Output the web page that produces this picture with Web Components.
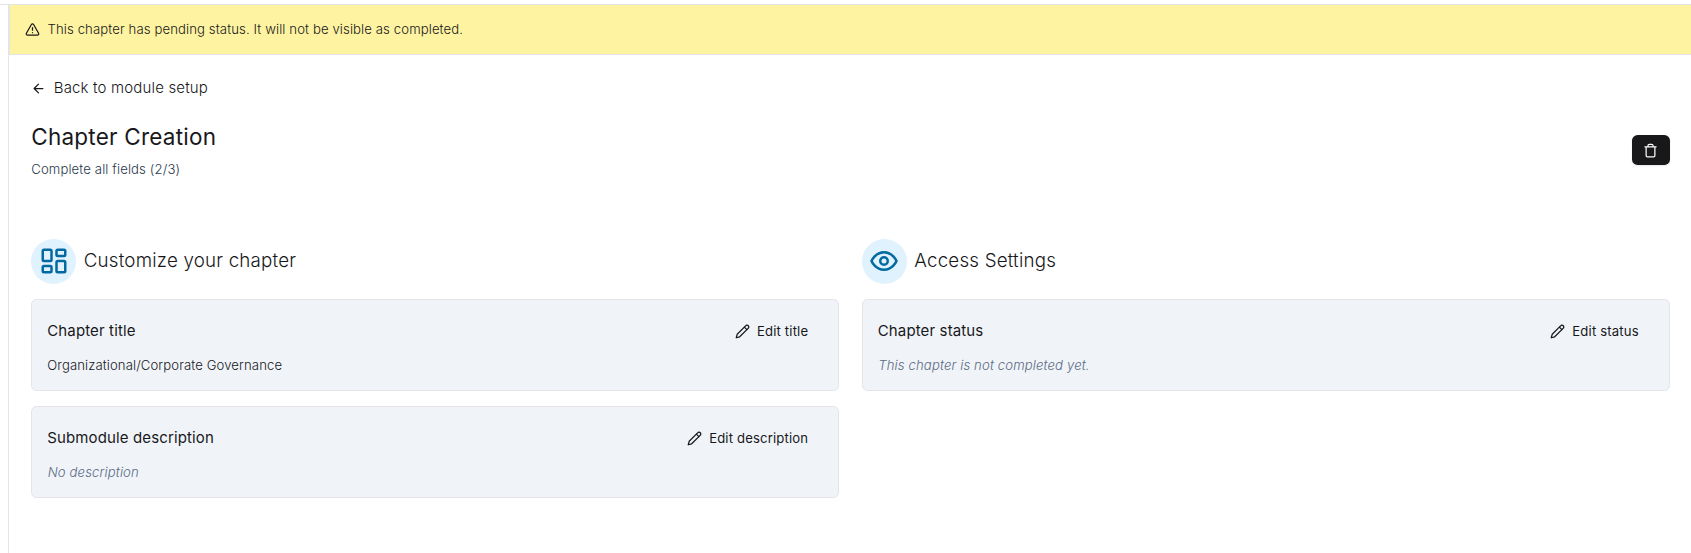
<!DOCTYPE html>
<html lang="en">
<head>
<meta charset="utf-8">
<title>Chapter Creation</title>
<style>
html{font-size:15px}
body{margin:0;background:#fff;color:#18181b;font-family:Inter,"Noto Sans",sans-serif;font-weight:300;line-height:1.5;overflow:hidden}
</style>
</head>
<body>
<chapter-page></chapter-page>
<script>
const define = (name, html) => {
  const template = document.createElement('template');
  template.innerHTML = html;
  customElements.define(name, class extends HTMLElement {
    constructor() {
      super();
      this.attachShadow({ mode: 'open' }).append(template.content.cloneNode(true));
    }
  });
};

const ICONS = {
  alert: '<path d="m21.73 18-8-14a2 2 0 0 0-3.48 0l-8 14A2 2 0 0 0 4 21h16a2 2 0 0 0 1.73-3Z"/><path d="M12 9v4M12 17h.01"/>',
  back: '<path d="m12 19-7-7 7-7M19 12H5"/>',
  trash: '<path d="M3 6h18M19 6v14c0 1-1 2-2 2H7c-1 0-2-1-2-2V6M8 6V4c0-1 1-2 2-2h4c1 0 2 1 2 2v2"/>',
  pencil: '<path d="M17 3a2.85 2.83 0 1 1 4 4L7.5 20.5 2 22l1.5-5.5Z"/><path d="m15 5 4 4"/>',
  dashboard: '<rect width="7" height="9" x="3" y="3" rx="1"/><rect width="7" height="5" x="14" y="3" rx="1"/><rect width="7" height="9" x="14" y="12" rx="1"/><rect width="7" height="5" x="3" y="16" rx="1"/>',
  eye: '<path d="M2 12s3-7 10-7 10 7 10 7-3 7-10 7-10-7-10-7Z"/><circle cx="12" cy="12" r="3"/>'
};

customElements.define('line-icon', class extends HTMLElement {
  constructor() {
    super();
    this.attachShadow({ mode: 'open' }).innerHTML = `
      <style>
        :host{display:block;flex:none;width:var(--icon-size,1rem);height:var(--icon-size,1rem)}
        svg{display:block;width:100%;height:100%;fill:none;stroke:currentColor;stroke-width:2;stroke-linecap:round;stroke-linejoin:round}
      </style>
      <svg viewBox="0 0 24 24">${ICONS[this.getAttribute('name')]}</svg>`;
  }
});

define('status-banner', `
  <style>
    :host{display:flex;align-items:center;gap:.5rem;box-sizing:border-box;height:50px;padding:0 15px;border:1px solid #e4e4e7;border-width:0 0 1px 1px;background:#fef3a1;font-size:.875rem;letter-spacing:.12px}
  </style>
  <line-icon name="alert"></line-icon><span><slot></slot></span>`);

define('back-link', `
  <style>
    :host{display:flex;align-items:center;gap:.5rem;height:1.5rem;margin-bottom:1.5rem;letter-spacing:.16px}
  </style>
  <line-icon name="back"></line-icon><span><slot></slot></span>`);

define('page-heading', `
  <style>
    :host{display:flex;align-items:center;justify-content:space-between}
    h1{margin:0 0 8px;font-size:1.5rem;line-height:2rem;font-weight:400;letter-spacing:.225px}
    p{margin:0;font-size:.875rem;line-height:1.25rem;color:#2a384d;letter-spacing:.13px}
    button{display:flex;align-items:center;height:2rem;padding:0 11.5px 0 11px;border:0;border-radius:5.6px;background:#18181b;color:#fafafa;box-shadow:0 1px 2px #0000001a}
  </style>
  <div><h1><slot name="title"></slot></h1><p><slot></slot></p></div>
  <button aria-label="Delete"><line-icon name="trash"></line-icon></button>`);

define('section-heading', `
  <style>
    :host{display:flex;align-items:center;gap:.5rem}
    .badge{padding:.5rem;border-radius:50%;background:#e0f2fe;color:#0369a1;--icon-size:2rem}
    h2{margin:0;font-size:1.25rem;line-height:1.75rem;font-weight:300;letter-spacing:.2px}
  </style>
  <div class="badge"><slot name="icon"></slot></div><h2><slot></slot></h2>`);

define('setting-card', `
  <style>
    :host{display:block;margin-top:1rem;padding:1rem;border:1px solid #e4e4e7;border-radius:5.6px;background:#f0f4f9}
    .top{display:flex;align-items:center;justify-content:space-between;height:2.25rem;font-weight:400;letter-spacing:.13px}
    .action{display:flex;align-items:center;gap:.5rem;padding:0 1rem;font-size:.875rem;letter-spacing:.16px}
    .value{margin-top:.5rem;font-size:.875rem;line-height:1.25rem;letter-spacing:.11px}
    :host([empty]) .value{font-style:italic;color:#5a6a82;letter-spacing:.14px;text-indent:.5px}
  </style>
  <div class="top"><slot name="title"></slot>
    <div class="action"><line-icon name="pencil"></line-icon><slot name="action"></slot></div></div>
  <div class="value"><slot></slot></div>`);

define('chapter-page', `
  <style>
    :host{display:block;box-sizing:border-box;height:553px;padding-top:4px}
    .rule{height:1px;background:#e4e4e7}
    main{margin-left:8px;height:548px;border-left:1px solid #e4e4e7}
    .content{padding:22px 21.25px 0 22.25px}
    .columns{display:grid;grid-template-columns:1fr 1fr;gap:1.5rem;margin-top:4rem}
  </style>
  <div class="rule"></div>
  <main>
    <status-banner>This chapter has pending status. It will not be visible as completed.</status-banner>
    <div class="content">
      <back-link>Back to module setup</back-link>
      <page-heading><span slot="title">Chapter Creation</span>Complete all fields (2/3)</page-heading>
      <div class="columns">
        <section>
          <section-heading><line-icon slot="icon" name="dashboard"></line-icon>Customize your chapter</section-heading>
          <setting-card><span slot="title">Chapter title</span><span slot="action">Edit title</span>Organizational/Corporate Governance</setting-card>
          <setting-card empty><span slot="title">Submodule description</span><span slot="action">Edit description</span>No description</setting-card>
        </section>
        <section>
          <section-heading><line-icon slot="icon" name="eye"></line-icon>Access Settings</section-heading>
          <setting-card empty><span slot="title">Chapter status</span><span slot="action">Edit status</span>This chapter is not completed yet.</setting-card>
        </section>
      </div>
    </div>
  </main>`);
</script>
</body>
</html>
